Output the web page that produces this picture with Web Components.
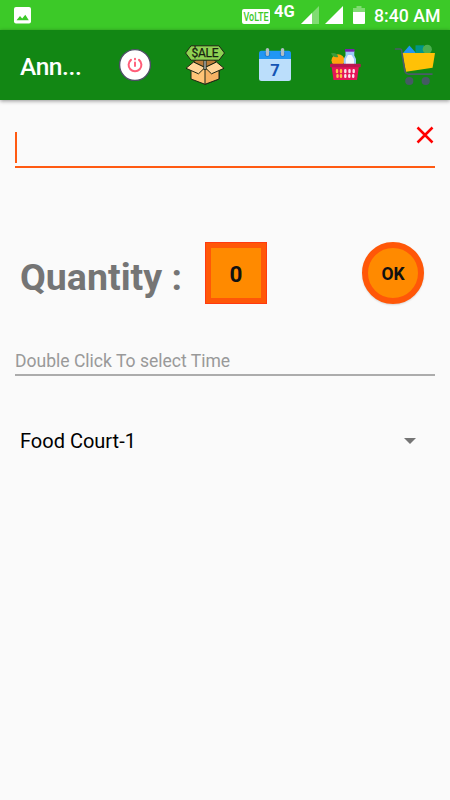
<!DOCTYPE html>
<html lang="en">
<head>
<meta charset="utf-8">
<meta name="viewport" content="width=device-width, initial-scale=1">
<title>Order</title>
<style>
    html, body {
        margin: 0;
        height: 100%;
        overflow: hidden;
        background: #fafafa;
        font-family: Roboto, "Liberation Sans", sans-serif;
    }
</style>
</head>
<body>
<order-screen></order-screen>

<script>
const icons = {
    power: `
        <circle cx="20" cy="20" r="15.4" fill="#fff" stroke="#4b5064" stroke-width="1.4"/>
        <path d="M16 14.9A6.4 6.4 0 1 0 24 14.9" fill="none" stroke="#ff5d78" stroke-width="2" stroke-linecap="round"/>
        <path d="M20 17.4V21M20 13.6V14.4" stroke="#ff5d78" stroke-width="1.9" stroke-linecap="round"/>`,
    sale: `
        <g stroke="#1d2614" stroke-width="1" stroke-linejoin="round">
            <path d="M6 22V34L20 39.3L34 34V22Z" fill="#ffc477"/>
            <path d="M20 24V39.3L34 34V22Z" fill="#f6b265"/>
            <path d="M8.5 17L20 22.5L31.5 17L28 14H12Z" fill="#bd7d3b"/>
            <path d="M8.5 17L1 23.3L13.5 28.8L20 22.5Z" fill="#ffd498"/>
            <path d="M31.5 17L39 23.3L26.5 28.8L20 22.5Z" fill="#ffd498"/>
            <path d="M18.8 15H21.2V24.5H18.8Z" fill="#a9adaf" stroke-width=".8"/>
            <path d="M6 .8H34L39.5 8L34 15.2H6L.6 8Z" fill="#8ed153"/>
        </g>
        <text x="20" y="12.3" text-anchor="middle" textLength="27" font-family="Roboto" font-size="12" font-weight="400" fill="#17230f" stroke="#17230f" stroke-width=".25">$ALE</text>`,
    calendar: `
        <path d="M4 13H36V33.5Q36 36 33.5 36H6.5Q4 36 4 33.5Z" fill="#bbdefb"/>
        <path d="M4 14V8.3Q4 5.8 6.5 5.8H33.5Q36 5.8 36 8.3V14Z" fill="#2196f3"/>
        <circle cx="12.4" cy="9" r="2.7" fill="#1976d2"/>
        <circle cx="27.5" cy="9" r="2.7" fill="#1976d2"/>
        <rect x="10.8" y="3" width="3.3" height="8" rx="1.6" fill="#b0bec5"/>
        <rect x="25.9" y="3" width="3.3" height="8" rx="1.6" fill="#b0bec5"/>
        <text x="20" y="30.7" text-anchor="middle" font-family="Roboto" font-size="16.5" font-weight="700" fill="#1455b4">7</text>`,
    basket: `
        <ellipse cx="13" cy="15.2" rx="6.5" ry="6" fill="#ffa20d"/>
        <path d="M6 8.2Q12 7 13.2 12Q8 13 6 8.2Z" fill="#399b3c"/>
        <path d="M20.5 6H29.3V10.5L31 14V20H18.8V14L20.5 10.5Z" fill="#9acbfa"/>
        <path d="M23 10L20.8 14V20H29V14L26.5 10Z" fill="#f1f6fc"/>
        <rect x="20" y="4" width="9.5" height="2.7" fill="#7226a9"/>
        <path d="M6.5 21H34L32 35H8.5Z" fill="#e51558"/>
        <rect x="5" y="18.7" width="30.7" height="3.6" rx=".8" fill="#b91550"/>
        <g stroke-width="2.4" stroke-linecap="round">
            <path d="M12 25.3V27M16 25.3V27M12.5 30.3V31.7M16 30.3V31.7" stroke="#ffc047"/>
            <path d="M20.3 25.3V27M24.5 25.3V27M28.7 25.3V27M20.3 30.3V31.7M24.3 30.3V31.7M28.2 30.3V31.7" stroke="#f9e4ed"/>
        </g>`,
    cart: `
        <path d="M8 8L14.4 .5L21 8Z" fill="#2196f3"/>
        <rect x="20.5" y=".3" width="8.5" height="8" fill="#009688"/>
        <circle cx="32.3" cy="4.3" r="4.6" fill="#4caf50"/>
        <path d="M7 8H40L37.6 22.7L11 26.8Z" fill="#ffc107"/>
        <path d="M.5 4H5.3Q6.3 4 6.5 5L9.8 25.7Q10.4 29.1 13.7 29.1H37" fill="none" stroke="#4b5c69" stroke-width="1.6" stroke-linecap="round"/>
        <circle cx="14.3" cy="36" r="4.1" fill="#455a64"/>
        <circle cx="30.7" cy="36" r="4.1" fill="#455a64"/>`
};

/** Phone status bar: notification, network, battery and clock */
class StatusBar extends HTMLElement
{
    constructor()
    {
        super();
        const Shadow = this.attachShadow({mode: "open"});
        Shadow.innerHTML = `
            <style>
                :host {
                    display: flex;
                    height: 30px;
                    padding: 0 11px 0 14px;
                    box-sizing: border-box;
                    align-items: center;
                    background: #3cc928;
                    color: #fff;
                }

                svg {
                    display: block;
                    flex: none;
                }

                .volte {
                    width: 28px;
                    height: 15px;
                    margin: 2px 4px 0 auto;
                    overflow: visible;
                }

                .net {
                    width: 22px;
                    margin: -7px 5px 0 0;
                    font-size: 16.5px;
                    line-height: 16px;
                    font-weight: 700;
                }

                .signal {
                    margin-right: 6px;
                }

                .battery {
                    margin: 0 9px 0 4px;
                }

                .time {
                    width: 65px;
                    font-size: 17.7px;
                    line-height: 20px;
                    font-weight: 500;
                    margin-top: 2px;
                    white-space: nowrap;
                }
            </style>
            <svg width="17" height="17" viewBox="0 0 17 17">
                <rect width="17" height="16.4" rx="2" fill="#fff"/>
                <path d="M2.5 13.3L6 9L8.2 11.6L11.3 7.8L14.8 13.3Z" fill="#3cc928"/>
            </svg>
            <svg class="volte" viewBox="0 0 28 15">
                <rect width="28" height="15" rx="2" fill="#fff"/>
                <text x="14" y="12" text-anchor="middle" textLength="25" lengthAdjust="spacingAndGlyphs" font-family="Roboto" font-size="12.5" font-weight="500" fill="#3cc928">VoLTE</text>
            </svg>
            <div class="net">4G</div>
            <svg class="signal" width="18" height="18" viewBox="0 0 18 18">
                <path d="M18 0V18H0Z" fill="#fff" opacity=".35"/>
                <path d="M11 7V18H0Z" fill="#fff"/>
            </svg>
            <svg class="signal" width="18" height="18" viewBox="0 0 18 18">
                <path d="M18 0V18H0Z" fill="#fff"/>
            </svg>
            <svg class="battery" width="12" height="18" viewBox="0 0 12 18">
                <path d="M3.5 0H8.5V2H12V6H0V2H3.5Z" fill="#fff" opacity=".35"/>
                <path d="M0 6H12V17Q12 18 11 18H1Q0 18 0 17Z" fill="#fff"/>
            </svg>
            <div class="time"><slot></slot></div>
        `;
    }
}

/** One toolbar action, drawn from the icon list */
class BarIcon extends HTMLElement
{
    connectedCallback()
    {
        const Shadow = this.attachShadow({mode: "open"});
        Shadow.innerHTML = `
            <style>
                :host {
                    display: flex;
                    width: 70px;
                    height: 70px;
                    align-items: center;
                    justify-content: center;
                }

                svg {
                    overflow: visible;
                }
            </style>
            <svg width="40" height="40" viewBox="0 0 40 40">${icons[this.getAttribute("name")]}</svg>
        `;
    }
}

class AppBar extends HTMLElement
{
    constructor()
    {
        super();
        const Shadow = this.attachShadow({mode: "open"});
        Shadow.innerHTML = `
            <style>
                :host {
                    display: flex;
                    height: 70px;
                    align-items: center;
                    background: #128714;
                    box-shadow: 0 1px 4px rgba(0,0,0,.42);
                }

                .title {
                    width: 80px;
                    padding: 3px 0 0 20px;
                    font-size: 24.5px;
                    line-height: 30px;
                    font-weight: 500;
                    letter-spacing: -.4px;
                    color: #fff;
                    white-space: nowrap;
                }
            </style>
            <div class="title"><slot></slot></div>
            <bar-icon name="power"></bar-icon>
            <bar-icon name="sale"></bar-icon>
            <bar-icon name="calendar"></bar-icon>
            <bar-icon name="basket"></bar-icon>
            <bar-icon name="cart"></bar-icon>
        `;
    }
}

/** Focused search field with its caret and clear button */
class SearchField extends HTMLElement
{
    constructor()
    {
        super();
        const Shadow = this.attachShadow({mode: "open"});
        Shadow.innerHTML = `
            <style>
                :host {
                    display: flex;
                    height: 43px;
                    padding-top: 7px;
                    box-sizing: border-box;
                    justify-content: space-between;
                    align-items: flex-start;
                    border-bottom: 2px solid #ff5a12;
                }

                .caret {
                    width: 2px;
                    height: 31px;
                    background: #ff5a12;
                }

                svg {
                    margin: -6px 1px 0 0;
                }
            </style>
            <div class="caret"></div>
            <svg width="18" height="18" viewBox="0 0 18 18">
                <path d="M1.5 1.5L16.5 16.5M16.5 1.5L1.5 16.5" stroke="#f00" stroke-width="2.5"/>
            </svg>
        `;
    }
}

/** Orange button, square unless the round attribute is set */
class OrderButton extends HTMLElement
{
    constructor()
    {
        super();
        const Shadow = this.attachShadow({mode: "open"});
        Shadow.innerHTML = `
            <style>
                :host {
                    display: flex;
                    width: 62px;
                    height: 62px;
                    box-sizing: border-box;
                    align-items: center;
                    justify-content: center;
                    padding-top: 2px;
                    border: 6px solid #ff5708;
                    background: #ff8a00;
                    color: #111;
                    font-size: 22.5px;
                    font-weight: 700;
                    outline: 1px solid #ff3a10;
                    outline-offset: -1px;
                }

                :host([round]) {
                    border-radius: 50%;
                    font-size: 17.5px;
                    outline: 0;
                    box-shadow: 0 1px 2px rgba(0,0,0,.14);
                }
            </style>
            <slot></slot>
        `;
    }
}

class QuantityRow extends HTMLElement
{
    constructor()
    {
        super();
        const Shadow = this.attachShadow({mode: "open"});
        Shadow.innerHTML = `
            <style>
                :host {
                    display: flex;
                    margin-top: 74px;
                    padding: 0 11px 0 5px;
                    align-items: center;
                }

                .label {
                    width: 185px;
                    padding-top: 8px;
                    font-size: 37.5px;
                    line-height: 44px;
                    font-weight: 700;
                    color: #757575;
                    white-space: nowrap;
                }

                [round] {
                    margin-left: auto;
                }
            </style>
            <div class="label">Quantity :</div>
            <order-button>0</order-button>
            <order-button round>OK</order-button>
        `;
    }
}

class TimeField extends HTMLElement
{
    constructor()
    {
        super();
        const Shadow = this.attachShadow({mode: "open"});
        Shadow.innerHTML = `
            <style>
                :host {
                    display: block;
                    margin-top: 46px;
                    height: 24px;
                    border-bottom: 2px solid #acacac;
                    font-size: 17.55px;
                    line-height: 22px;
                    color: #999;
                }
            </style>
            <slot></slot>
        `;
    }
}

class PlaceSelect extends HTMLElement
{
    constructor()
    {
        super();
        const Shadow = this.attachShadow({mode: "open"});
        Shadow.innerHTML = `
            <style>
                :host {
                    display: flex;
                    margin-top: 50px;
                    padding: 0 19px 0 5px;
                    height: 30px;
                    align-items: center;
                    justify-content: space-between;
                    font-size: 20px;
                    color: #000;
                }
            </style>
            <slot></slot>
            <svg width="12" height="6" viewBox="0 0 12 6">
                <path d="M0 0H12L6 6Z" fill="#757575"/>
            </svg>
        `;
    }
}

class OrderScreen extends HTMLElement
{
    constructor()
    {
        super();
        const Shadow = this.attachShadow({mode: "open"});
        Shadow.innerHTML = `
            <style>
                :host {
                    display: block;
                    width: 450px;
                    height: 800px;
                    background: #fafafa;
                }

                main {
                    padding: 25px 15px 0;
                }
            </style>
            <status-bar>8:40 AM</status-bar>
            <app-bar>Ann...</app-bar>
            <main>
                <search-field></search-field>
                <quantity-row></quantity-row>
                <time-field>Double Click To select Time</time-field>
                <place-select>Food Court-1</place-select>
            </main>
        `;
    }
}

customElements.define("status-bar", StatusBar);
customElements.define("bar-icon", BarIcon);
customElements.define("app-bar", AppBar);
customElements.define("search-field", SearchField);
customElements.define("order-button", OrderButton);
customElements.define("quantity-row", QuantityRow);
customElements.define("time-field", TimeField);
customElements.define("place-select", PlaceSelect);
customElements.define("order-screen", OrderScreen);
</script>
</body>
</html>
